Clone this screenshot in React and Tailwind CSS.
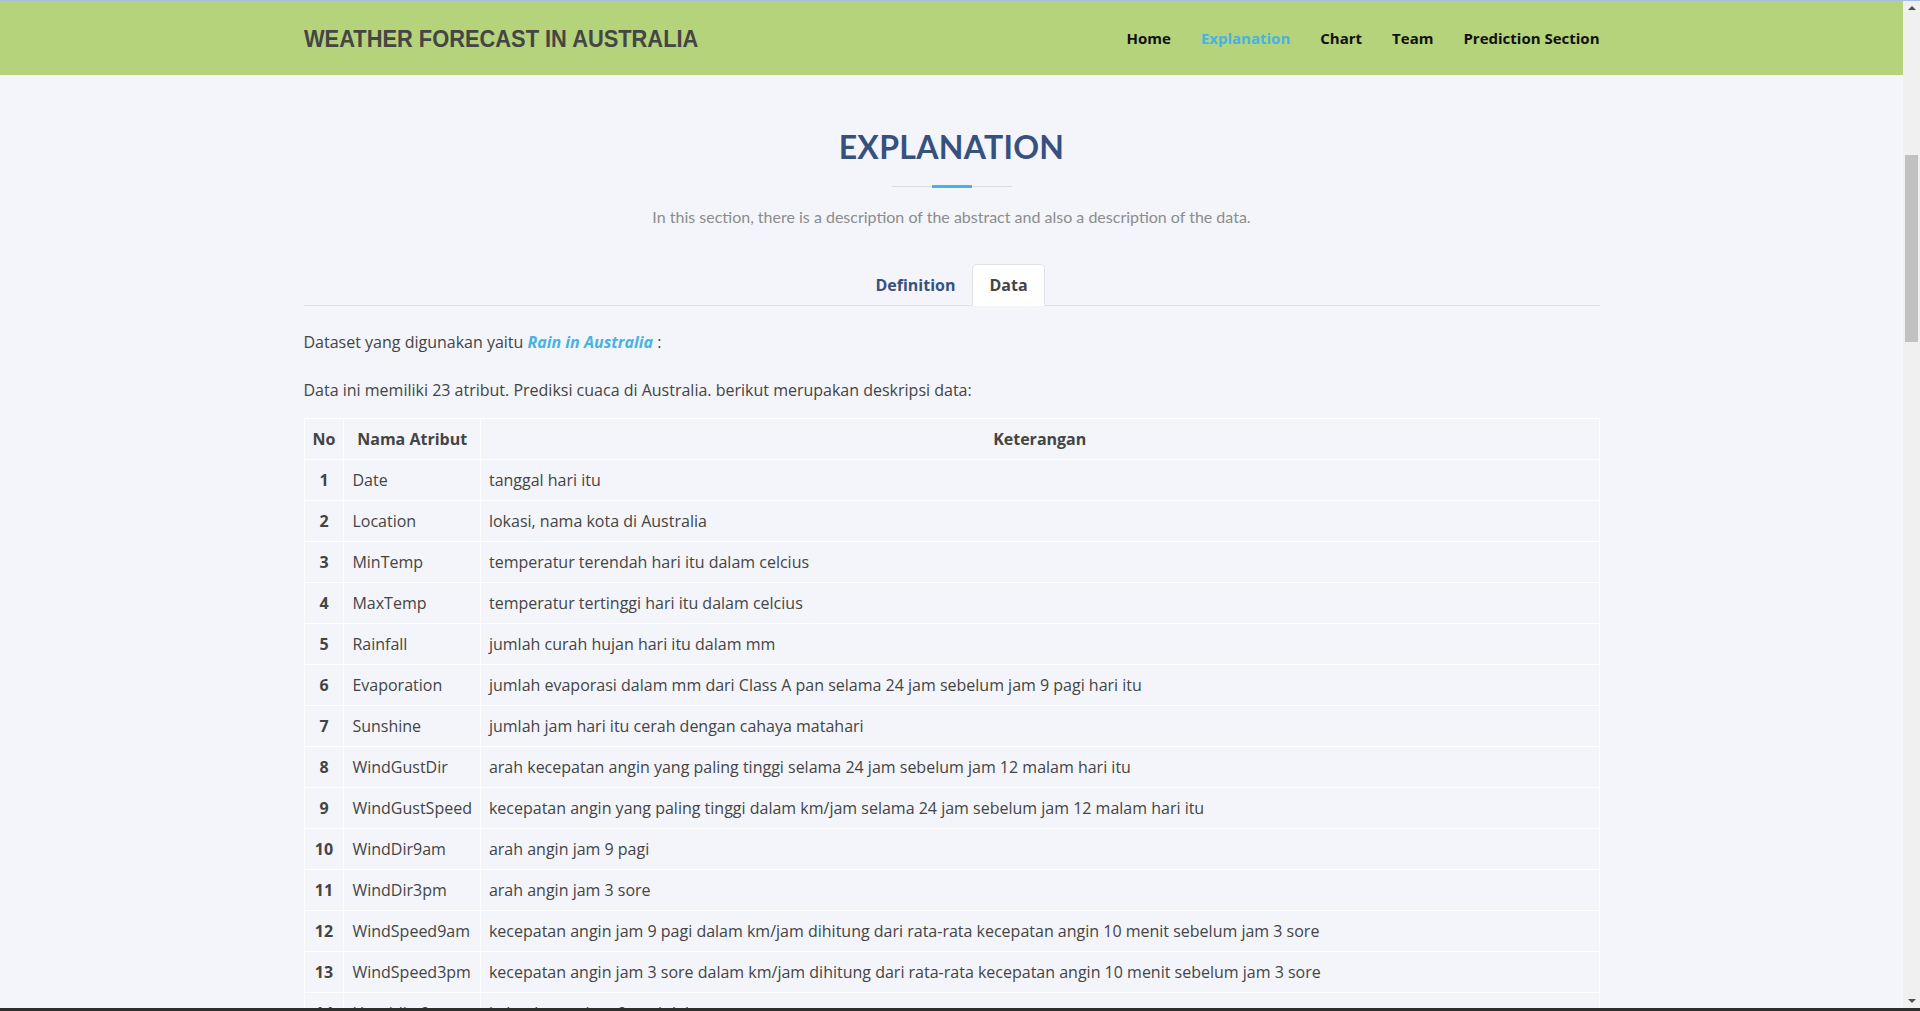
import React from "react";

const rows = [
  ["Date", "tanggal hari itu"],
  ["Location", "lokasi, nama kota di Australia"],
  ["MinTemp", "temperatur terendah hari itu dalam celcius"],
  ["MaxTemp", "temperatur tertinggi hari itu dalam celcius"],
  ["Rainfall", "jumlah curah hujan hari itu dalam mm"],
  ["Evaporation", "jumlah evaporasi dalam mm dari Class A pan selama 24 jam sebelum jam 9 pagi hari itu"],
  ["Sunshine", "jumlah jam hari itu cerah dengan cahaya matahari"],
  ["WindGustDir", "arah kecepatan angin yang paling tinggi selama 24 jam sebelum jam 12 malam hari itu"],
  ["WindGustSpeed", "kecepatan angin yang paling tinggi dalam km/jam selama 24 jam sebelum jam 12 malam hari itu"],
  ["WindDir9am", "arah angin jam 9 pagi"],
  ["WindDir3pm", "arah angin jam 3 sore"],
  ["WindSpeed9am", "kecepatan angin jam 9 pagi dalam km/jam dihitung dari rata-rata kecepatan angin 10 menit sebelum jam 3 sore"],
  ["WindSpeed3pm", "kecepatan angin jam 3 sore dalam km/jam dihitung dari rata-rata kecepatan angin 10 menit sebelum jam 3 sore"],
  ["Humidity9am", "kelembapan jam 9 pagi dalam persen"],
  ["Humidity3pm", "kelembapan jam 3 sore dalam persen"],
  ["Pressure9am", "tekanan atmosfer jam 9 pagi"],
  ["Pressure3pm", "tekanan atmosfer jam 3 sore"],
];

const navItems = ["Home", "Explanation", "Chart", "Team", "Prediction Section"];

/* ================= SCROLLBAR ================= */
function FakeScrollbar() {
  return (
    <div className="w-[17px] bg-[#f0f0f0] flex flex-col items-center">
      <div className="h-[14px] flex items-center justify-center">
        <div className="w-0 h-0 border-l-[4px] border-r-[4px] border-b-[4px] border-l-transparent border-r-transparent border-b-[#505050]" />
      </div>
      <div className="flex-1 w-full px-[2px] pt-[140px]">
        <div className="h-[187px] bg-[#c1c1c1]" />
      </div>
      <div className="h-[14px] flex items-center justify-center">
        <div className="w-0 h-0 border-l-[4px] border-r-[4px] border-t-[4px] border-l-transparent border-r-transparent border-t-[#505050]" />
      </div>
    </div>
  );
}

export default function App() {
  return (
    <div className="h-[1011px] w-full flex flex-col overflow-hidden bg-[#f3f5fa] font-['Open_Sans',sans-serif] text-[#444444]">
      <div className="h-px bg-[#aabde0]" />

      <div className="flex-1 flex min-h-0">
        <main className="flex-1 min-w-0 overflow-hidden flex flex-col">
          {/* ================= HEADER ================= */}
          <header className="h-[74px] shrink-0 bg-[#b4d37a]">
            <div className="w-[1296px] mx-auto h-full flex items-center justify-between">
              <h1 className="text-[24px] leading-[30px] font-bold text-[#454545] font-['Liberation_Sans',Arial,sans-serif] whitespace-nowrap origin-left scale-x-[0.91] translate-y-[1px]">
                WEATHER FORECAST IN AUSTRALIA
              </h1>
              <nav className="flex items-center gap-[30px] text-[15px] font-bold">
                {navItems.map((n) => (
                  <a
                    key={n}
                    className={n === "Explanation" ? "text-[#47b2e4]" : "text-[#111111]"}
                  >
                    {n}
                  </a>
                ))}
              </nav>
            </div>
          </header>

          {/* ================= SECTION ================= */}
          <section className="w-[1296px] mx-auto pt-[53px]">
            <div className="flex flex-col items-center">
              <h2 className="text-[32px] leading-[38px] font-bold text-[#37517e] font-['Lato',sans-serif] tracking-[0.3px]">
                EXPLANATION
              </h2>
              <div className="mt-[19px] flex items-center">
                <div className="w-[40px] h-px bg-[#dddddd]" />
                <div className="w-[40px] h-[3px] bg-[#47b2e4]" />
                <div className="w-[40px] h-px bg-[#dddddd]" />
              </div>
              <p className="mt-[17px] text-[16px] leading-[24px] text-[#8c8c8c] font-['Lato',sans-serif]">
                In this section, there is a description of the abstract and also a description of the data.
              </p>
            </div>

            {/* TABS */}
            <div className="mt-[35px] flex justify-center border-b border-[#dee2e6]">
              <button className="px-4 py-2 text-[16px] leading-[24px] font-bold text-[#37517e] border border-transparent -mb-px">
                Definition
              </button>
              <button className="px-4 py-2 text-[16px] leading-[24px] font-bold text-[#444444] bg-white border border-[#dee2e6] border-b-white rounded-t-[5px] -mb-px">
                Data
              </button>
            </div>

            <div className="text-[16px] leading-[24px]">
              <p className="mt-[24px]">
                Dataset yang digunakan yaitu{" "}
                <a className="font-bold italic text-[#47b2e4]">Rain in Australia</a> :
              </p>
              <p className="mt-[24px]">
                Data ini memiliki 23 atribut. Prediksi cuaca di Australia. berikut merupakan deskripsi data:
              </p>

              <table className="mt-[16px] w-full border-collapse">
                <thead>
                  <tr>
                    <th className="w-[39px] border border-white px-2 py-2 text-center font-bold">No</th>
                    <th className="w-[135px] border border-white px-2 py-2 text-center font-bold">Nama Atribut</th>
                    <th className="border border-white px-2 py-2 text-center font-bold">Keterangan</th>
                  </tr>
                </thead>
                <tbody>
                  {rows.map(([name, desc], i) => (
                    <tr key={name}>
                      <td className="border border-white px-2 py-2 text-center font-bold">{i + 1}</td>
                      <td className="border border-white px-2 py-2 whitespace-nowrap">{name}</td>
                      <td className="border border-white px-2 py-2">{desc}</td>
                    </tr>
                  ))}
                </tbody>
              </table>
            </div>
          </section>
        </main>

        <FakeScrollbar />
      </div>

      <div className="h-[3px] bg-[#2e2e2e]" />
    </div>
  );
}
